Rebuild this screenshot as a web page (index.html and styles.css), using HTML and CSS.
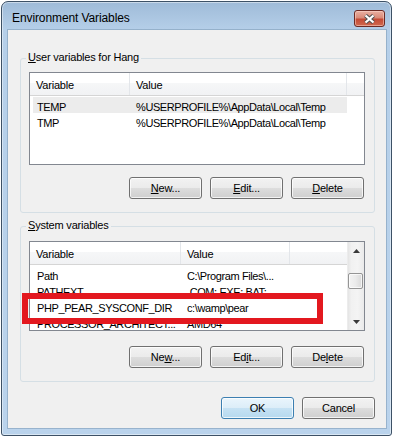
FILE: index.html
```html
<!DOCTYPE html>
<html>
<head>
<meta charset="utf-8">
<link rel="stylesheet" href="styles.css">
</head>
<body>
<div class="window">
  <div class="titlebar">
    <span class="title">Environment Variables</span>
    <div class="close">
      <svg width="13" height="10" viewBox="0 0 13 10">
        <path d="M2.5 1.5 L10.5 8.5 M10.5 1.5 L2.5 8.5" stroke="#505050" stroke-width="4.2" fill="none"/>
        <path d="M2.5 1.5 L10.5 8.5 M10.5 1.5 L2.5 8.5" stroke="#ffffff" stroke-width="2.3" fill="none"/>
      </svg>
    </div>
  </div>
  <div class="client">
    <div class="group">
      <div class="legend"><u>U</u>ser variables for Hang</div>
      <div class="listbox user-list">
        <div class="lv-main">
          <div class="lv-header">
            <div class="hcol u1">Variable</div>
            <div class="hcol u2">Value</div>
            <div class="hcol rest"></div>
          </div>
          <div class="lv-rows">
            <div class="row selected"><span class="cell u1">TEMP</span><span class="cell u2">%USERPROFILE%\AppData\Local\Temp</span></div>
            <div class="row"><span class="cell u1">TMP</span><span class="cell u2">%USERPROFILE%\AppData\Local\Temp</span></div>
          </div>
        </div>
      </div>
      <div class="btn-row">
        <button class="btn"><u>N</u>ew...</button>
        <button class="btn"><u>E</u>dit...</button>
        <button class="btn"><u>D</u>elete</button>
      </div>
    </div>

    <div class="group sys">
      <div class="legend"><u>S</u>ystem variables</div>
      <div class="listbox sys-list">
        <div class="lv-main">
          <div class="lv-header">
            <div class="hcol s1">Variable</div>
            <div class="hcol s2">Value</div>
            <div class="hcol rest"></div>
          </div>
          <div class="lv-rows">
            <div class="row"><span class="cell s1">Path</span><span class="cell s2">C:\Program Files\...</span></div>
            <div class="row"><span class="cell s1">PATHEXT</span><span class="cell s2">.COM;.EXE;.BAT;...</span></div>
            <div class="row"><span class="cell s1">PHP_PEAR_SYSCONF_DIR</span><span class="cell s2">c:\wamp\pear</span></div>
            <div class="row"><span class="cell s1">PROCESSOR_ARCHITECT...</span><span class="cell s2">AMD64</span></div>
          </div>
        </div>
        <div class="scrollbar">
          <div class="sb-btn">
            <svg width="7" height="4" viewBox="0 0 7 4"><polygon points="3.5,0 7,4 0,4" fill="#3a3a3a"/></svg>
          </div>
          <div class="sb-track"><div class="sb-thumb"></div></div>
          <div class="sb-btn">
            <svg width="7" height="4" viewBox="0 0 7 4"><polygon points="0,0 7,0 3.5,4" fill="#3a3a3a"/></svg>
          </div>
        </div>
      </div>
      <div class="highlight"></div>
      <div class="btn-row">
        <button class="btn">Ne<u>w</u>...</button>
        <button class="btn">Ed<u>i</u>t...</button>
        <button class="btn">De<u>l</u>ete</button>
      </div>
    </div>

    <div class="dlg-row">
      <button class="btn default">OK</button>
      <button class="btn">Cancel</button>
    </div>
  </div>
</div>
</body>
</html>
```

FILE: styles.css
```css
html, body {
  margin: 0;
  padding: 0;
  background: #ffffff;
}

body {
  font-family: "Liberation Sans", Arial, sans-serif;
  font-size: 11px;
  letter-spacing: -0.2px;
  color: #000;
}

.window {
  margin: 1px 0 0 1px;
  width: 391px;
  height: 435px;
  box-sizing: border-box;
  border: 1px solid #3d5166;
  border-radius: 7px 7px 3px 3px;
  background: linear-gradient(#9fbbd8 0px, #b5cfe9 28px, #bad3ec 100%);
  box-shadow: inset 0 0 0 1px rgba(255, 255, 255, 0.45);
  padding: 0 5px 7px 6px;
  display: flex;
  flex-direction: column;
}

.titlebar {
  height: 28px;
  flex: none;
  display: flex;
  align-items: flex-start;
}

.title {
  font-size: 12px;
  letter-spacing: -0.1px;
  line-height: 15px;
  margin: 9px 0 0 4px;
}

.close {
  margin: 8px 1px 0 auto;
  width: 31px;
  height: 17px;
  box-sizing: border-box;
  border: 1px solid #6b2a24;
  border-radius: 3px;
  background: linear-gradient(#eab0a2 0%, #d98b79 45%, #c44b36 55%, #d0694f 100%);
  box-shadow: inset 0 0 0 1px rgba(255, 220, 210, 0.5);
  display: flex;
  align-items: center;
  justify-content: center;
}

.client {
  flex: 1;
  background: #f0f0f0;
  box-shadow: 0 0 0 1px rgba(90, 120, 150, 0.35);
  display: flex;
  flex-direction: column;
}

.group {
  margin: 28px 11px 0 12px;
  border: 1px solid #d5dfe5;
  border-radius: 3px;
  padding: 0 9px 13px 8px;
  position: relative;
}

.group.sys {
  margin-top: 13px;
}

.legend {
  width: fit-content;
  height: 15px;
  line-height: 15px;
  margin: -9px 0 0 -3px;
  padding: 0 2px;
  background: #f0f0f0;
}

.listbox {
  margin-top: 7px;
  border: 1px solid #828790;
  background: #fff;
  display: flex;
}

.user-list {
  height: 93px;
  box-sizing: border-box;
}

.sys-list {
  margin-top: 8px;
  height: 90px;
  box-sizing: border-box;
}

.lv-main {
  flex: 1;
  display: flex;
  flex-direction: column;
  min-width: 0;
}

.lv-header {
  height: 23px;
  box-sizing: border-box;
  display: flex;
  border-bottom: 1px solid #d5d5d5;
  background: linear-gradient(#ffffff 0%, #ffffff 45%, #f6f7f8 45%, #f1f2f4 100%);
  flex: none;
}

.hcol {
  box-sizing: border-box;
  border-right: 1px solid #e3e6ea;
  padding: 3px 0 0 6px;
  line-height: 19px;
  white-space: nowrap;
}

.hcol.rest {
  flex: 1;
  border-right: none;
}

.hcol.u1 { width: 100px; }
.hcol.u2 { width: 217px; }
.hcol.s1 { width: 151px; }
.hcol.s2 { width: 109px; }

.lv-rows {
  flex: 1;
  overflow: hidden;
  padding-top: 1px;
}

.row {
  display: flex;
  height: 16px;
  margin-left: 3px;
  width: fit-content;
  white-space: nowrap;
}

.row.selected {
  background: #ececec;
}

.cell {
  box-sizing: border-box;
  height: 16px;
  line-height: 16px;
  padding-top: 2px;
  overflow: hidden;
  letter-spacing: -0.4px;
}

.cell.u1 { width: 97px; padding-left: 4px; }
.cell.u2 { width: 217px; padding-left: 6px; }
.cell.s1 { width: 148px; padding-left: 4px; }
.cell.s2 { width: 109px; padding-left: 6px; }

.scrollbar {
  width: 17px;
  flex: none;
  display: flex;
  flex-direction: column;
  background: linear-gradient(90deg, #e4e4e4 0%, #f1f1f1 20%, #f4f4f4 60%, #eaeaea 100%);
  border-left: 1px solid #ececec;
  box-sizing: border-box;
}

.sb-btn {
  height: 17px;
  flex: none;
  display: flex;
  align-items: center;
  justify-content: center;
}

.sb-track {
  flex: 1;
}

.sb-thumb {
  margin: 14px 0 0 0;
  width: 15px;
  height: 16px;
  box-sizing: border-box;
  border: 1px solid #959595;
  border-radius: 2px;
  background: linear-gradient(90deg, #f3f3f3 0%, #ebebeb 50%, #d9d9d9 100%);
  box-shadow: inset 0 0 0 1px rgba(255, 255, 255, 0.7);
}

.highlight {
  position: absolute;
  left: 1px;
  top: 66px;
  width: 301px;
  height: 31px;
  box-sizing: border-box;
  border: 6px solid #e3181f;
}

.btn-row {
  display: flex;
  justify-content: flex-end;
  gap: 8px;
  margin-top: 12px;
  padding-right: 1px;
}

.sys .btn-row {
  margin-top: 15px;
}

.btn {
  width: 73px;
  height: 22px;
  box-sizing: border-box;
  border: 1px solid #707070;
  border-radius: 3px;
  background: linear-gradient(#f2f2f2 0%, #ebebeb 50%, #dddddd 50%, #cfcfcf 100%);
  box-shadow: inset 0 0 0 1px rgba(255, 255, 255, 0.75);
  font-family: "Liberation Sans", Arial, sans-serif;
  font-size: 11px;
  letter-spacing: -0.2px;
  color: #000;
  padding: 0;
  line-height: 20px;
  text-align: center;
}

.btn.default {
  border-color: #3c7fb1;
  background: linear-gradient(#eaf5fc 0%, #dcedf8 50%, #c6e2f4 50%, #b6d9ef 100%);
}

.dlg-row {
  display: flex;
  justify-content: flex-end;
  gap: 8px;
  margin: 15px 11px 0 0;
}
```
